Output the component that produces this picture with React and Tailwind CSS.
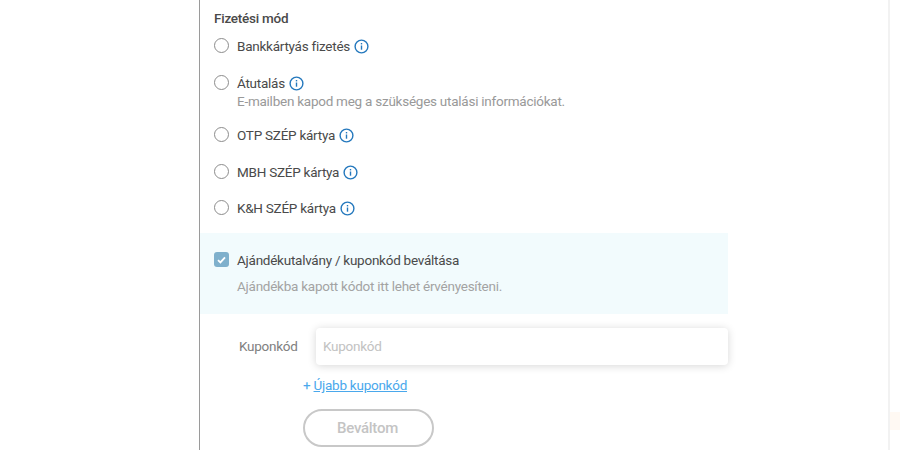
import React from 'react';

function InfoIcon() {
    return (
        <svg width="15" height="15" viewBox="0 0 15 15" fill="none" className="shrink-0">
            <circle cx="7.5" cy="7.5" r="6.4" stroke="#2478bd" strokeWidth="1.4" />
            <rect x="6.8" y="6.5" width="1.4" height="4.2" fill="#2478bd" />
            <rect x="6.8" y="4" width="1.4" height="1.4" fill="#2478bd" />
        </svg>
    );
}

function PaymentOption({ label, note, className }) {
    return (
        <div className={`flex items-start ml-[14px] ${className}`}>
            <span className="w-[15px] h-[15px] border border-[#8c8c8c] rounded-full bg-white shrink-0"></span>
            <div className="ml-[8px]">
                <div className="flex items-center h-[17px] gap-[4px] text-[13.5px] leading-[17px] text-[#4a4a4a]">
                    <span>{label}</span>
                    <InfoIcon />
                </div>
                {note && <p className="mt-[1px] text-[13.5px] leading-[17px] text-[#999]">{note}</p>}
            </div>
        </div>
    );
}

export default function App() {
    return (
        <div className="flex h-[450px] w-[900px] overflow-hidden bg-white font-['Roboto',sans-serif] tracking-[-0.25px]">
            <div className="w-[199px] shrink-0"></div>

            <div className="w-[691px] shrink-0 h-[450px] border-l border-l-[#9a9a9a] border-r-2 border-r-[#f2f2f2] pt-[10px]">
                <h2 className="ml-[14px] text-[13.5px] leading-[17px] font-medium text-[#4a4a4a]">Fizetési mód</h2>

                <PaymentOption className="mt-[11px]" label="Bankkártyás fizetés" />
                <PaymentOption
                    className="mt-[20px]"
                    label="Átutalás"
                    note="E-mailben kapod meg a szükséges utalási információkat."
                />
                <PaymentOption className="mt-[17px]" label="OTP SZÉP kártya" />
                <PaymentOption className="mt-[20px]" label="MBH SZÉP kártya" />
                <PaymentOption className="mt-[19px]" label="K&H SZÉP kártya" />

                <div className="mt-[16px] w-[528px] h-[81px] bg-[#f2fbfd] pl-[14px] pt-[19px]">
                    <div className="flex items-center h-[17px]">
                        <span className="w-[15px] h-[15px] rounded-[3px] bg-[#7fb0cc] flex items-center justify-center shrink-0 -mt-[2px]">
                            <svg width="9" height="8" viewBox="0 0 9 8" fill="none">
                                <path d="M1 4.2 L3.4 6.4 L8 1.4" stroke="#fff" strokeWidth="1.8" />
                            </svg>
                        </span>
                        <span className="ml-[8px] text-[13.5px] leading-[17px] text-[#4a4a4a]">Ajándékutalvány / kuponkód beváltása</span>
                    </div>
                    <p className="ml-[23px] mt-[9px] text-[13.5px] leading-[17px] text-[#a3a3a3]">Ajándékba kapott kódot itt lehet érvényesíteni.</p>
                </div>

                <div className="flex items-center mt-[14px] h-[37px]">
                    <label className="ml-[39px] w-[77px] text-[13.5px] text-[#808080]">Kuponkód</label>
                    <div className="w-[412px] h-[37px] rounded-[4px] bg-white shadow-[0_1px_8px_rgba(0,0,0,0.16)] pl-[7px] flex items-center text-[13.5px] text-[#c2c2c2]">
                        Kuponkód
                    </div>
                </div>

                <div className="ml-[103px] mt-[12px] text-[13.5px] leading-[17px] text-[#4aa8ec]">
                    + <a className="underline">Újabb kuponkód</a>
                </div>

                <button className="ml-[103px] mt-[15px] w-[131px] h-[38px] rounded-full border-2 border-[#c8c8c8] text-[15px] font-medium text-[#c4c4c4] bg-white pr-[2px]">
                    Beváltom
                </button>
            </div>

            <div className="flex-1 pt-[412px]">
                <div className="h-[18px] bg-[#fff9f3]"></div>
            </div>
        </div>
    );
}
